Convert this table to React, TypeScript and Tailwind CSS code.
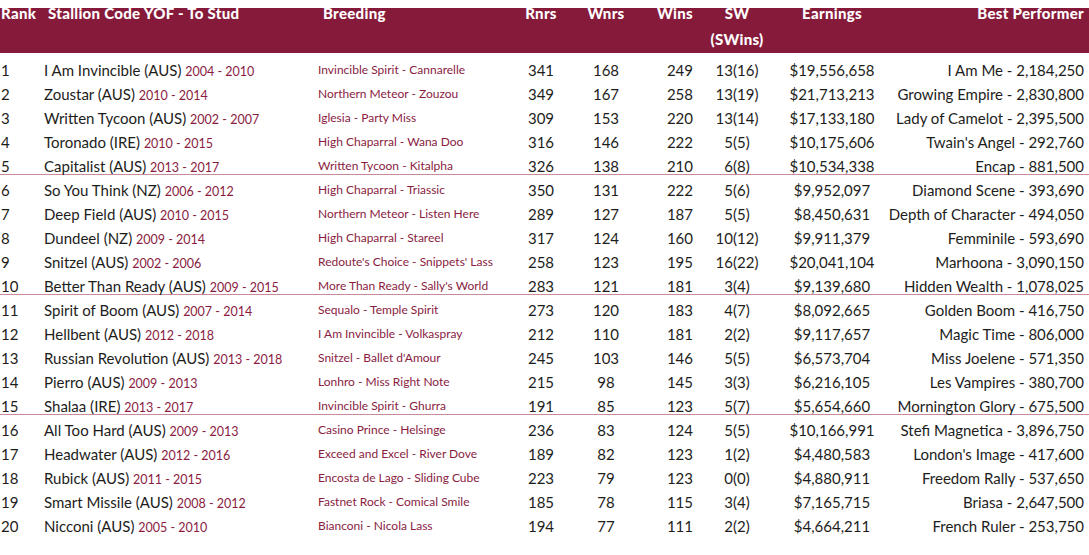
const rows: [string, string, string, string, string, string, string, string, string][] = [
  ["I Am Invincible (AUS)", "2004 - 2010", "Invincible Spirit - Cannarelle", "341", "168", "249", "13(16)", "$19,556,658", "I Am Me - 2,184,250"],
  ["Zoustar (AUS)", "2010 - 2014", "Northern Meteor - Zouzou", "349", "167", "258", "13(19)", "$21,713,213", "Growing Empire - 2,830,800"],
  ["Written Tycoon (AUS)", "2002 - 2007", "Iglesia - Party Miss", "309", "153", "220", "13(14)", "$17,133,180", "Lady of Camelot - 2,395,500"],
  ["Toronado (IRE)", "2010 - 2015", "High Chaparral - Wana Doo", "316", "146", "222", "5(5)", "$10,175,606", "Twain's Angel - 292,760"],
  ["Capitalist (AUS)", "2013 - 2017", "Written Tycoon - Kitalpha", "326", "138", "210", "6(8)", "$10,534,338", "Encap - 881,500"],
  ["So You Think (NZ)", "2006 - 2012", "High Chaparral - Triassic", "350", "131", "222", "5(6)", "$9,952,097", "Diamond Scene - 393,690"],
  ["Deep Field (AUS)", "2010 - 2015", "Northern Meteor - Listen Here", "289", "127", "187", "5(5)", "$8,450,631", "Depth of Character - 494,050"],
  ["Dundeel (NZ)", "2009 - 2014", "High Chaparral - Stareel", "317", "124", "160", "10(12)", "$9,911,379", "Femminile - 593,690"],
  ["Snitzel (AUS)", "2002 - 2006", "Redoute's Choice - Snippets' Lass", "258", "123", "195", "16(22)", "$20,041,104", "Marhoona - 3,090,150"],
  ["Better Than Ready (AUS)", "2009 - 2015", "More Than Ready - Sally's World", "283", "121", "181", "3(4)", "$9,139,680", "Hidden Wealth - 1,078,025"],
  ["Spirit of Boom (AUS)", "2007 - 2014", "Sequalo - Temple Spirit", "273", "120", "183", "4(7)", "$8,092,665", "Golden Boom - 416,750"],
  ["Hellbent (AUS)", "2012 - 2018", "I Am Invincible - Volkaspray", "212", "110", "181", "2(2)", "$9,117,657", "Magic Time - 806,000"],
  ["Russian Revolution (AUS)", "2013 - 2018", "Snitzel - Ballet d'Amour", "245", "103", "146", "5(5)", "$6,573,704", "Miss Joelene - 571,350"],
  ["Pierro (AUS)", "2009 - 2013", "Lonhro - Miss Right Note", "215", "98", "145", "3(3)", "$6,216,105", "Les Vampires - 380,700"],
  ["Shalaa (IRE)", "2013 - 2017", "Invincible Spirit - Ghurra", "191", "85", "123", "5(7)", "$5,654,660", "Mornington Glory - 675,500"],
  ["All Too Hard (AUS)", "2009 - 2013", "Casino Prince - Helsinge", "236", "83", "124", "5(5)", "$10,166,991", "Stefi Magnetica - 3,896,750"],
  ["Headwater (AUS)", "2012 - 2016", "Exceed and Excel - River Dove", "189", "82", "123", "1(2)", "$4,480,583", "London's Image - 417,600"],
  ["Rubick (AUS)", "2011 - 2015", "Encosta de Lago - Sliding Cube", "223", "79", "123", "0(0)", "$4,880,911", "Freedom Rally - 537,650"],
  ["Smart Missile (AUS)", "2008 - 2012", "Fastnet Rock - Comical Smile", "185", "78", "115", "3(4)", "$7,165,715", "Briasa - 2,647,500"],
  ["Nicconi (AUS)", "2005 - 2010", "Bianconi - Nicola Lass", "194", "77", "111", "2(2)", "$4,664,211", "French Ruler - 253,750"],
]

const cols = "grid grid-cols-[44px_274px_192px_62px_68px_53px_88px_102px_1fr]"

export default function App() {
  return (
    <div className="h-[555px] w-[1089px] overflow-hidden bg-white font-['Lato',sans-serif] text-[#1d1d1b]">
      {/* header: white strip then maroon band */}
      <div className={`${cols} h-[53px] bg-[linear-gradient(to_bottom,#ffffff_8px,#861a3a_8px)] text-[15px] font-black leading-[26px] tracking-[0.3px] text-white`}>
        <div className="pl-[1px]">Rank</div>
        <div className="pl-[4px]">Stallion Code YOF - To Stud</div>
        <div className="pl-[5px]">Breeding</div>
        <div className="text-center">Rnrs</div>
        <div className="text-center">Wnrs</div>
        <div className="text-right">Wins</div>
        <div className="text-center">
          SW
          <br />
          (SWins)
        </div>
        <div className="text-center">Earnings</div>
        <div className="pr-[5px] text-right">Best Performer</div>
      </div>

      <div className="mt-[2px]">
        {rows.map((r, i) => (
          <div
            key={i}
            className={`${cols} h-[24px] items-start whitespace-nowrap pt-[6px] text-[15px] leading-[18px] ${
              i === 4 || i === 9 || i === 14 ? "border-b border-[#c98a9c]" : ""
            }`}
          >
            <div className="pl-[1px]">{i + 1}</div>
            <div>
              {r[0]} <span className="text-[12.5px] text-[#8a1c3f]">{r[1]}</span>
            </div>
            <div className="text-[12px] text-[#8a1c3f]">{r[2]}</div>
            <div className="text-center">{r[3]}</div>
            <div className="text-center">{r[4]}</div>
            <div className="text-right">{r[5]}</div>
            <div className="text-center">{r[6]}</div>
            <div className="text-center">{r[7]}</div>
            <div className="pr-[5px] text-right">{r[8]}</div>
          </div>
        ))}
      </div>
    </div>
  )
}
